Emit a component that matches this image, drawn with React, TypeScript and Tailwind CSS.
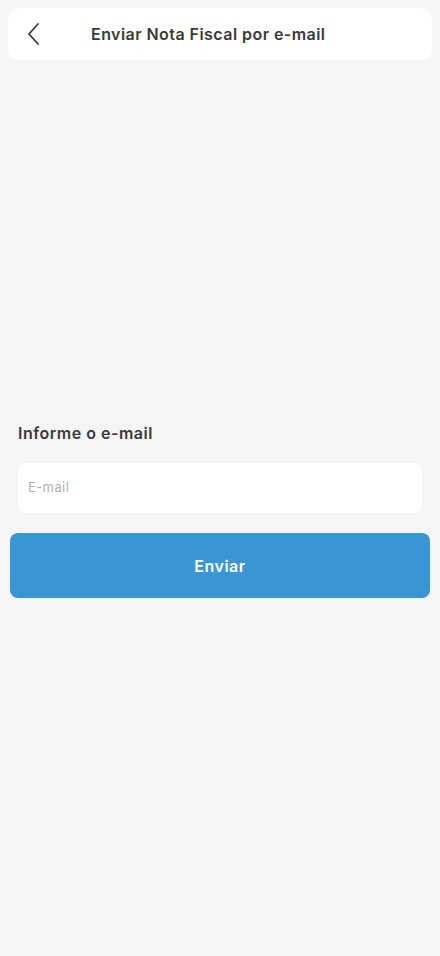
import React from "react";

export default function App() {
  return (
    <div
      className="w-[440px] h-[956px] bg-[#f5f5f5] flex flex-col"
      style={{ fontFamily: "Inter, 'Noto Sans', sans-serif" }}
    >
      <div className="mx-2 mt-2 h-[52px] bg-white rounded-[10px] flex items-center">
        <button className="w-[60px] h-full flex items-center pl-[16px] text-[#333]">
          <svg width="20" height="24" viewBox="0 0 20 24" fill="none">
            <path d="M14 2 L5 12 L14 22" stroke="#3a3a3a" strokeWidth="1.8" strokeLinecap="round" strokeLinejoin="round" />
          </svg>
        </button>
        <div className="ml-[23px] text-[16px] font-semibold text-[#3a3a3a] tracking-[0.45px]">
          Enviar Nota Fiscal por e-mail
        </div>
      </div>

      <div className="h-[361px]" />

      <div className="px-[18px] text-[16px] font-semibold text-[#3a3a3a] leading-[24px] tracking-[0.5px]">
        Informe o e-mail
      </div>

      <div className="mx-[18px] mt-[18px] h-[50px] bg-white rounded-[8px] flex items-center px-[10px]">
        <input
          placeholder="E-mail"
          className="w-full outline-none bg-transparent text-[13px] tracking-[0.4px] text-[#333] placeholder:text-[#b0b0b0]"
        />
      </div>

      <button className="mx-[10px] mt-[20px] h-[65px] bg-[#3995d3] rounded-[8px] text-white text-[16px] font-semibold tracking-[0.5px]">
        Enviar
      </button>
    </div>
  );
}
